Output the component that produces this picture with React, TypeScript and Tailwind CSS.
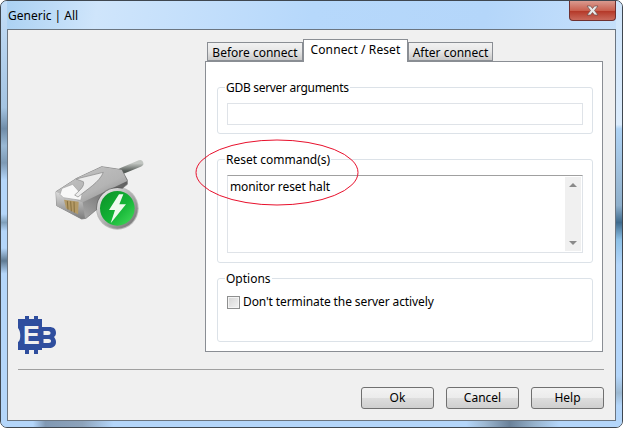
function PlugIcon() {
  return (
    <svg className="w-[120px] h-[95px]" viewBox="0 0 360 285">
      <defs>
        <linearGradient id="top" x1="0" y1="0" x2="1" y2="1">
          <stop offset="0" stopColor="#c6c6c6" />
          <stop offset="0.6" stopColor="#b4b4b4" />
          <stop offset="1" stopColor="#808080" />
        </linearGradient>
        <linearGradient id="side" x1="0" y1="1" x2="1" y2="0">
          <stop offset="0" stopColor="#c4c4c4" />
          <stop offset="0.5" stopColor="#808080" />
          <stop offset="1" stopColor="#4f4f4f" />
        </linearGradient>
        <linearGradient id="front" x1="0" y1="0" x2="0" y2="1">
          <stop offset="0" stopColor="#dcdcdc" />
          <stop offset="1" stopColor="#7c7c7c" />
        </linearGradient>
        <linearGradient id="cable" x1="0" y1="0" x2="0" y2="1">
          <stop offset="0" stopColor="#c2c6c2" />
          <stop offset="1" stopColor="#565c58" />
        </linearGradient>
        <linearGradient id="ring" x1="0" y1="0" x2="1" y2="1">
          <stop offset="0" stopColor="#f4f4f4" />
          <stop offset="1" stopColor="#6a6a6a" />
        </linearGradient>
        <linearGradient id="green" x1="0" y1="0" x2="1" y2="1">
          <stop offset="0" stopColor="#0b8f26" />
          <stop offset="0.55" stopColor="#14b436" />
          <stop offset="1" stopColor="#46de5c" />
        </linearGradient>
      </defs>
      <path d="M245 78L300 55" stroke="url(#cable)" strokeWidth="20" strokeLinecap="round" />
      <path d="M48 140L50 182L125 222L138 220L262 118L262 105L245 74L185 65L110 100Z" fill="url(#side)" stroke="#6c6c6c" strokeWidth="2" />
      <path d="M48 140L110 100L185 65L245 74L262 108L128 172Z" fill="url(#top)" />
      <path d="M48 140L128 172L135 220L125 222L50 182Z" fill="url(#front)" />
      <path d="M60 148L66 130L98 118L126 150L122 166L70 158Z" fill="#f8f8f8" stroke="#a0a0a0" strokeWidth="2" />
      <path d="M72 164L116 170L114 208L78 190Z" fill="#b49a66" />
      <path d="M82 168L84 194M92 169L94 199M102 170L103 203" stroke="#7c6636" strokeWidth="2.5" />
      <path d="M108 102L190 82C178 112 142 132 114 156L104 150C124 132 134 122 130 110Z" fill="#ececec" stroke="#858585" strokeWidth="2" />
      <circle cx="232" cy="190" r="64" fill="#3a3a3a" opacity="0.3" />
      <circle cx="232" cy="190" r="61" fill="url(#ring)" />
      <circle cx="232" cy="190" r="52" fill="url(#green)" />
      <path d="M237 148L207 195H225L212 235L258 178H238L250 148Z" fill="#eefbee" />
    </svg>
  );
}

function EbLogo() {
  return (
    <svg className="w-[40px] h-[40px]" viewBox="0 0 40 40">
      <path
        d="M3 3H8V0H12V3H17V0H21V3H25V11H32C37 11 39 13 39 17C39 19 38 20 37 21C38 22 39 24 39 26C39 30 36 32 32 32H25V34H21V38H17V34H12V38H8V34H1V26C4 25 4 15 1 12V3Z"
        fill="#2f4e9e"
      />
      <text x="6" y="28" fontSize="25" fontWeight="700" fill="#f0f0f0" fontFamily="'Liberation Sans', sans-serif">
        E
      </text>
      <path d="M26.5 15H31C33 15 33.5 16 33.5 17C33.5 18 33 19 31 19H26.5ZM26.5 23H31.5C33.5 23 34 24 34 25C34 26 33.5 27 31.5 27H26.5Z" fill="#f0f0f0" />
    </svg>
  );
}

function Group({
  title,
  className,
  titleClass,
  children,
}: {
  title: string;
  className: string;
  titleClass?: string;
  children?: React.ReactNode;
}) {
  return (
    <div className={`border border-[#dce2e8] rounded-[3px] px-[9px] ${className}`}>
      <div className={`w-fit -mt-[9px] -ml-[2px] bg-white px-[1px] h-[17px] leading-[17px] ${titleClass ?? ""}`}>{title}</div>
      <div className="mt-[7px]">{children}</div>
    </div>
  );
}

function Tab({ label, active, className }: { label: string; active?: boolean; className: string }) {
  return (
    <div
      className={`border border-[#8a8e94] text-center ${
        active
          ? "relative z-10 h-[23px] -mb-[1px] border-b-0 bg-white leading-[20px] tracking-[0.1px]"
          : "h-[19px] bg-gradient-to-b from-[#f2f2f2] via-[#e6e6e6] to-[#c9c9c9] leading-[19px]"
      } ${className}`}
    >
      {label}
    </div>
  );
}

function DialogButton({ label }: { label: string }) {
  return (
    <button className="w-[73px] h-[22px] rounded-[3px] border border-[#707070] bg-[linear-gradient(#f3f3f3_0%,#ebebeb_50%,#dddddd_52%,#cfcfcf_100%)] leading-[20px]">
      {label}
    </button>
  );
}

export default function App() {
  return (
    <div className="relative w-[623px] h-[428px] bg-white overflow-hidden text-[12px] text-black font-['Noto_Sans',sans-serif]">
      <div className="relative w-full h-full rounded-[7px] border border-[#3f4750] bg-[linear-gradient(100deg,#a9d0f2_0%,#cfe5fb_14%,#b6d8fb_45%,#b4d6fa_70%,#cfe5fb_100%)] flex flex-col px-[6px] pb-[6px]">
        {/* blurred desktop showing through the glass frame */}
        <div className="absolute left-0 top-0 bottom-0 w-[6px] rounded-l-[6px] bg-[linear-gradient(#c4def8_0%,#a4c4e2_25%,#6f8ca8_30%,#9ab9d5_34%,#7d9ab5_38%,#b4d6fa_42%,#b4d6fa_50%,#7f9fba_52%,#b4d6fa_54%,#b4d6fa_58%,#5f7a92_61%,#b4d6fa_64%,#b4d6fa_100%)]" />
        <div className="absolute right-0 top-0 bottom-0 w-[6px] rounded-r-[6px] bg-[linear-gradient(#cfe5fb_0%,#dcecfc_29%,#aed3f5_30%,#9cbcd8_42%,#8fb0cc_48%,#3f6a8c_52%,#8cc0e6_56%,#b4d6fa_62%,#b4d6fa_88%,#9cb8d0_92%,#b4d6fa_95%,#b4d6fa_100%)]" />
        <div className="absolute left-[1px] right-[1px] bottom-0 h-[6px] rounded-b-[6px] bg-[linear-gradient(90deg,#b4d6fa_5%,#8199b4_7%,#8da3bb_13%,#b4d6fa_18%,#b4d6fa_75%,#9db8d2_78%,#6a8199_82%,#96b2cc_86%,#b4d6fa_90%)]" />
        <div className="relative h-[28px] flex justify-between shrink-0">
          <div className="pt-[5px] pl-[1px] leading-[20px]">Generic | All</div>
          <div className="w-[47px] h-[20px] rounded-b-[4px] border border-t-0 border-[#6e3030] bg-[linear-gradient(#d99a8f_0%,#c9604f_50%,#b53a2a_55%,#c96a5c_100%)] flex items-center justify-center">
            <svg className="w-[13px] h-[11px]" viewBox="0 0 13 11">
              <path d="M1 1H4.5L6.5 3.5L8.5 1H12L8.5 5.5L12 10H8.5L6.5 7.5L4.5 10H1L4.5 5.5Z" fill="#e8e8e8" stroke="#6b4a48" strokeWidth="0.7" />
            </svg>
          </div>
        </div>
        <div className="relative flex-1 border border-[#6b7580] bg-[#f0f0f0] flex flex-col">
          <div className="flex h-[322px]">
            <div className="w-[197px] shrink-0 flex flex-col">
              <div className="mt-[115px] ml-[32px]">
                <PlugIcon />
              </div>
              <div className="mt-[76px] ml-[9px]">
                <EbLogo />
              </div>
            </div>
            <div className="w-[398px] shrink-0 pt-[10px]">
              <div className="flex items-end h-[21px] pl-[2px]">
                <Tab label="Before connect" className="w-[96px]" />
                <Tab label="Connect / Reset" active className="w-[105px]" />
                <Tab label="After connect" className="w-[85px]" />
              </div>
              <div className="h-[291px] border border-[#8a8e94] bg-white pl-[11px] pr-[9px] pt-[25px] flex flex-col">
                <Group title="GDB server arguments" titleClass="tracking-[-0.3px]" className="h-[47px]">
                  <div className="h-[22px] border border-[#dfe3e8]" />
                </Group>
                <Group title="Reset command(s)" className="h-[104px] mt-[25px]">
                  <div className="h-[78px] border border-[#dfe3e8] border-t-[#a0a0a0] flex justify-between p-[1px] pl-[2px]">
                    <div className="leading-[19px] tracking-[-0.1px]">monitor reset halt</div>
                    <div className="w-[16px] bg-[#f0f0f0] flex flex-col justify-between items-center py-[6px]">
                      <div className="w-0 h-0 border-x-[4px] border-x-transparent border-b-[4px] border-b-[#8a8a8a]" />
                      <div className="w-0 h-0 border-x-[4px] border-x-transparent border-t-[4px] border-t-[#8a8a8a]" />
                    </div>
                  </div>
                </Group>
                <Group title="Options" className="h-[64px] mt-[15px]">
                  <div className="flex items-center gap-[3px]">
                    <div className="w-[13px] h-[13px] border border-[#8e8f8f] bg-[linear-gradient(135deg,#d4d4d4,#f3f3f3)] shadow-[inset_0_0_0_1px_#f4f4f4]" />
                    <div className="leading-[16px] tracking-[-0.1px]">Don't terminate the server actively</div>
                  </div>
                </Group>
              </div>
            </div>
          </div>
          <div className="mt-[17px] ml-[10px] w-[586px] h-px bg-[#a0a0a0]" />
          <div className="mt-[17px] ml-[353px] flex gap-[12px]">
            <DialogButton label="Ok" />
            <DialogButton label="Cancel" />
            <DialogButton label="Help" />
          </div>
        </div>
      </div>
      <svg className="absolute left-[195px] top-[139px] w-[165px] h-[68px]" viewBox="0 0 165 68">
        <ellipse cx="82" cy="33.5" rx="81" ry="32.5" fill="none" stroke="#e8102c" strokeWidth="1" />
      </svg>
    </div>
  );
}
